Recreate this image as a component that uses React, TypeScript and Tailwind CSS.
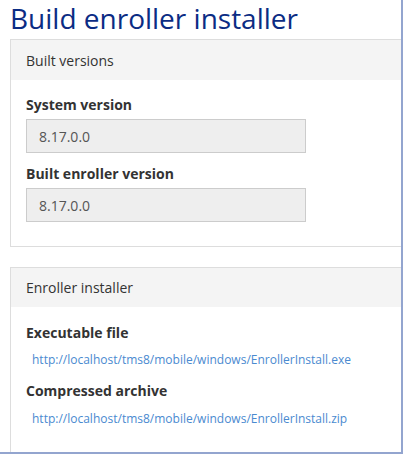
export default function App() {
  const font = { fontFamily: '"Open Sans", "Liberation Sans", sans-serif' };
  return (
    <div
      className="w-[403px] h-[454px] overflow-hidden bg-white flex flex-col border-r-2 border-b-2 border-[#93a5cf]"
      style={font}
    >
      <div className="flex-1 overflow-hidden pl-[10px]">
        <h1 className="text-[28px] leading-[34px] pt-[1px] h-[39px] text-[#0b2c84] font-normal m-0 whitespace-nowrap">
          Build enroller installer
        </h1>

        {/* Built versions */}
        <div className="w-[420px] border border-[#dddddd] bg-white">
          <div className="h-[40px] bg-[#f4f4f4] flex items-center pl-[15px] text-[14px] text-[#333333]">
            Built versions
          </div>
          <div className="pl-[15px] pt-[15px] pb-[24px]">
            <div className="text-[14px] leading-[20px] font-bold text-[#333333] mb-[4px]">
              System version
            </div>
            <div className="w-[280px] h-[34px] bg-[#eeeeee] border border-[#cccccc] flex items-center pl-[12px] text-[14px] text-[#555555]">
              8.17.0.0
            </div>
            <div className="text-[14px] leading-[20px] font-bold text-[#333333] mt-[11px] mb-[4px]">
              Built enroller version
            </div>
            <div className="w-[280px] h-[34px] bg-[#eeeeee] border border-[#cccccc] flex items-center pl-[12px] text-[14px] text-[#555555]">
              8.17.0.0
            </div>
          </div>
        </div>

        {/* Enroller installer */}
        <div className="w-[420px] mt-[20px] border border-[#dddddd] bg-white">
          <div className="h-[39px] bg-[#f4f4f4] flex items-center pl-[15px] text-[14px] text-[#333333]">
            Enroller installer
          </div>
          <div className="pl-[15px] pt-[16px] pb-[30px]">
            <div className="text-[14px] leading-[20px] font-bold text-[#333333]">
              Executable file
            </div>
            <a
              href="#"
              className="block pl-[6px] mt-[8px] text-[12px] leading-[17px] text-[#4a8ad0] no-underline"
            >
              http://localhost/tms8/mobile/windows/EnrollerInstall.exe
            </a>
            <div className="text-[14px] leading-[20px] font-bold text-[#333333] mt-[13px]">
              Compressed archive
            </div>
            <a
              href="#"
              className="block pl-[6px] mt-[9px] text-[12px] leading-[17px] text-[#4a8ad0] no-underline"
            >
              http://localhost/tms8/mobile/windows/EnrollerInstall.zip
            </a>
          </div>
        </div>
      </div>
    </div>
  );
}
